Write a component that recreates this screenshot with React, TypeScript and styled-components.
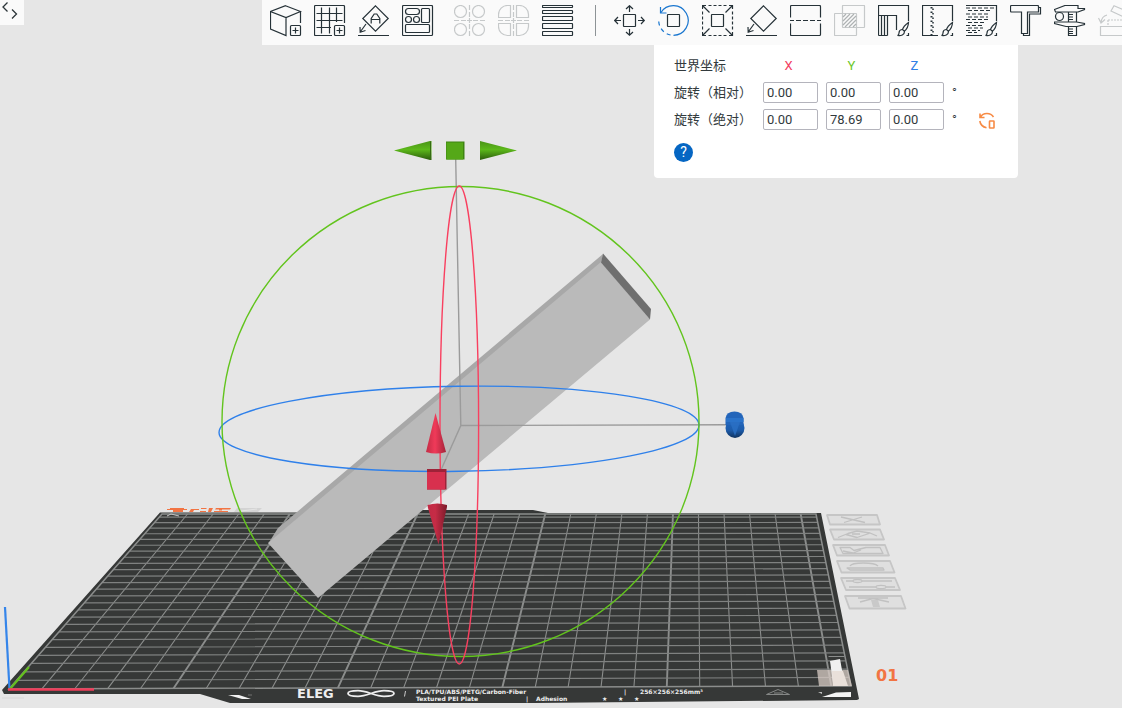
import React from "react";
import styled, { createGlobalStyle } from "styled-components";

const GlobalStyle = createGlobalStyle`
  *, *::before, *::after { box-sizing: border-box; }
  html, body { margin: 0; background: #e6e6e6; }
  body {
    font-family: Roboto, "Noto Sans CJK SC", sans-serif;
    font-size: 13px;
    color: #323a3d;
    overflow: hidden;
  }
`;

const Page = styled.main`
  display: grid;
  grid-template-columns: minmax(0, 1fr);
  min-height: 100vh;
  background: #e6e6e6;
`;

const Scene = styled.svg`
  grid-area: 1 / 1;
  display: block;
  width: 100%;
  height: auto;
`;

const Overlay = styled.div`
  grid-area: 1 / 1;
  z-index: 1;
  display: flex;
  flex-direction: column;
`;

const TopRow = styled.header`
  display: flex;
  align-items: flex-start;
`;

const CodeTab = styled.button`
  flex: none;
  width: 24px;
  height: 25px;
  margin-right: 238px;
  padding: 0;
  border: 0;
  background: #fafafa;
  color: #2c3539;
`;

const Toolbar = styled.nav`
  flex: 1;
  min-width: 0;
  display: flex;
  gap: 12px;
  height: 45px;
  padding: 5px 0 8px 8px;
  background: #fafafa;
  overflow: hidden;
`;

const tones = { normal: "#263238", active: "#1976cf", disabled: "#c6c9ca" };

const Tool = styled.button<{ $tone: keyof typeof tones; $spaced?: boolean }>`
  flex: none;
  width: 32px;
  height: 32px;
  margin-left: ${(p) => (p.$spaced ? "8px" : "0")};
  padding: 0;
  border: 0;
  background: none;
  color: ${(p) => tones[p.$tone]};
`;

const Divider = styled.span`
  flex: none;
  width: 1px;
  height: 31px;
  margin: 0 6px 0 9px;
  background: #8d9396;
`;

const Icon = styled.svg`
  display: block;
  fill: none;
  stroke: currentColor;
`;

const PanelRow = styled.div`
  display: flex;
  justify-content: flex-end;
  padding-right: 104px;
`;

const Panel = styled.section`
  width: 364px;
  padding: 7px 20px 16px;
  background: #fff;
  border-radius: 0 0 4px 4px;
`;

const Row = styled.div`
  display: grid;
  grid-template-columns: 81px repeat(3, 55px) 19px 17px;
  column-gap: 8px;
  align-items: center;
  height: 27px;
`;

const RowLabel = styled.span`
  line-height: 20px;
  white-space: nowrap;
`;

const Axis = styled.span<{ $color: string }>`
  padding-right: 4px;
  text-align: center;
  line-height: 20px;
  color: ${(p) => p.$color};
`;

const Field = styled.input`
  width: 55px;
  height: 21px;
  padding: 0 3px;
  border: 1px solid #b4b4bc;
  border-radius: 2px;
  background: #fff;
  font: 13px/19px Roboto, sans-serif;
  color: #323a3d;
  outline: none;
`;

const Unit = styled.span`
  line-height: 20px;
`;

const ResetButton = styled.button`
  width: 17px;
  height: 20px;
  padding: 2px 0 0;
  border: 0;
  background: none;
  color: #f78b45;
`;

const HelpButton = styled.button`
  display: block;
  width: 19px;
  height: 19px;
  margin-top: 10px;
  padding: 0;
  border: 0;
  border-radius: 50%;
  background: #0566c3;
  color: #fff;
  font: 14px/19px Roboto, sans-serif;
  text-align: center;
`;

/* ---------- toolbar glyphs, each on a 32 x 32 grid ---------- */

const plusBadge = (
  <>
    <rect x="20.5" y="20.5" width="10" height="10" rx="1" />
    <path d="M25.5 22.5v6M22.5 25.5h6" />
  </>
);

const layFace = <path d="M17.5.8 30.2 13.5 17.5 26.2 4.8 13.5ZM0 30.5h31M8 19 2.2 27M2 22l.2 5.2 5.3-1.7" />;

const brush = (
  <path d="M30.5 17.5c-2 1.5-5.5 5-6 7l1.8 1.8c2-1.5 4-5.5 4.2-8.8ZM24 24.5c-2 .2-3 1.6-3 3.5 0 1.5-.8 2.3-1.5 2.5 3.5.5 7-.5 7-4M30.5 28v2.5h-2" />
);

const fuzzRows: [number, number][] = [
  [3, 28], [5.5, 25], [9, 23], [12, 22], [14.5, 22], [17.5, 19], [20.5, 18], [23, 17], [25.5, 14], [27.5, 11],
];

const glyphs: Record<string, React.ReactNode> = {
  add: (
    <>
      <path d="M15.5.7 30.5 6.5 16 12.5.5 6.5ZM.5 6.5V24L16 30.5v-18M30.5 6.5V18" />
      {plusBadge}
    </>
  ),
  plate: (
    <>
      <path d="M30.5 18V1.5a1 1 0 0 0-1-1h-28a1 1 0 0 0-1 1v28a1 1 0 0 0 1 1H18" />
      <path d="M7.5 2.5v26M15.5 2.5v26M22.5 2.5V17M2.5 8.5h26M2.5 15.5h26M2.5 22.5H17" />
      {plusBadge}
    </>
  ),
  orient: (
    <>
      {layFace}
      <path d="M13.2 18.5v-5l3-4.500h2.600l3 4.500v5M13.200 14.500h8.600" />
    </>
  ),
  arrange: (
    <>
      <rect x=".5" y=".5" width="30" height="30" rx="1" />
      <rect x="3.5" y="3.5" width="14" height="6" rx="3" />
      <rect x="19.5" y="3.5" width="8" height="14" rx="1" />
      <circle cx="6.5" cy="14.5" r="3" />
      <circle cx="14.5" cy="14.5" r="3" />
      <rect x="3.5" y="19.5" width="24" height="8" rx="1" />
    </>
  ),
  objects: (
    <>
      <circle cx="6.5" cy="6.5" r="6" />
      <circle cx="24.5" cy="6.5" r="6" />
      <circle cx="6.5" cy="24.5" r="6" />
      <circle cx="24.5" cy="24.5" r="6" />
      <path d="M15.5 0v5m0 2v5m0 1v5m0 1v5m0 2v5M0 15.5h5m2 0h5m1 0h5m1 0h5m2 0h5" />
    </>
  ),
  parts: (
    <>
      <path d="M12.5.5h-3a9 9 0 0 0-9 9v3h12ZM18.5.5h3a9 9 0 0 1 9 9v3h-12ZM12.5 30.5h-3a9 9 0 0 1-9-9v-3h12ZM18.5 30.5h3a9 9 0 0 0 9-9v-3h-12Z" />
      <path d="M15.5 0v5m0 2v5m0 1v5m0 1v5m0 2v5M0 15.5h5m2 0h5m1 0h5m1 0h5m2 0h5" />
    </>
  ),
  layers: (
    <>
      <rect x=".5" y=".5" width="30" height="2" rx=".5" />
      <rect x=".5" y="5.5" width="30" height="3" rx=".5" />
      <rect x=".5" y="11.5" width="30" height="4" rx=".5" />
      <rect x=".5" y="18.5" width="30" height="5" rx=".5" />
      <rect x=".5" y="26.5" width="30" height="4" rx=".5" />
    </>
  ),
  move: (
    <>
      <rect x="9.5" y="9.5" width="12" height="12" rx=".5" />
      <path d="M15.5 7V.7M12 4 15.5.7 19 4M15.5 24v6.3M12 27l3.5 3.3L19 27M7 15.5H.7M4 12 .7 15.5 4 19M24 15.5h6.3M27 12l3.3 3.5L27 19" />
    </>
  ),
  rotate: (
    <>
      <rect x="9.5" y="9.5" width="12" height="12" rx=".5" stroke="#263238" />
      <path d="M2.8 7.7A14.8 14.8 0 1 1 15.5 30.3" />
      <path d="M15.5 30.3A14.8 14.8 0 0 1 .7 15.5" strokeDasharray="4 3.5" strokeDashoffset="-3" />
      <path d="M2.5 2v6h6" />
    </>
  ),
  scale: (
    <>
      <rect x="9.5" y="9.5" width="12" height="12" rx=".5" />
      <path d="M.5 4V.5H4M27 .5h3.5V4M.5 27v3.5H4M30.5 27v3.5H27M.5.5l7 7M30.5.5l-7 7M.5 30.5l7-7M30.5 30.5l-7-7" />
      <path d="M6.5.5h18M6.5 30.5h18M.5 6.5v18M30.5 6.5v18" strokeDasharray="3 2" />
    </>
  ),
  lay: layFace,
  cut: <path d="M.5 12.5v-11a1 1 0 0 1 1-1h28a1 1 0 0 1 1 1v11M.5 18.5v11a1 1 0 0 0 1 1h28a1 1 0 0 0 1-1v-11M0 15.5h4m2 0h5m2 0h5m2 0h5m2 0h4" />,
  boolean: (
    <>
      <rect x=".5" y="8.5" width="22" height="22" rx=".5" />
      <rect x="8.5" y=".5" width="22" height="22" rx=".5" />
      <path d="M9 12l3-3M9 16l7-7M9 20l11-11M11 22 22 11M15 22l7-7M19 22l3-3" stroke="#aeb2b3" />
    </>
  ),
  support: (
    <>
      <path d="M.5 30.5V.5h30V16M.5 10.5h18V25M3.5 10.5v20M6.5 10.5v20M9.5 10.5v20M.5 30.5h9" />
      {brush}
    </>
  ),
  seam: (
    <>
      <path d="M30.5 16V.5H.5v30H16" />
      <path d="M9.5 2v28" strokeDasharray="1.5 3" strokeWidth="2" />
      <path d="M11 3.5v26" strokeDasharray="1.5 3" strokeWidth="1.5" />
      {brush}
    </>
  ),
  fuzzy: (
    <>
      <path d="M0 .5h30.5V16M0 30.5h16" />
      {fuzzRows.map(([y, end], i) => (
        <path key={y} d={`M${i % 2 ? 2 : 0} ${y}H${end}`} strokeDasharray="4 2" />
      ))}
      {brush}
    </>
  ),
  text: (
    <>
      <path d="M.5 1.5a1 1 0 0 1 1-1h26a1 1 0 0 1 1 1V7h-11v21.5h-6V7h-10a1 1 0 0 1-1-1Z" />
      <path d="M28.5 2.5h2V9h-11v21.5h-6v-2" />
    </>
  ),
  measure: (
    <>
      <path d="M.5 4.5 11 .5h13v3h6.5v1L24 7H1.500ZM.5 17h22l8 1.500v1L23 21.500H12L.5 18.500Z" />
      <circle cx="5.500" cy="11.500" r="4" />
      <path d="M14.5 7v10M22.500 7v10M14.500 22v8.500h8V22M15 9.500h4M15 12h4M15 14.500h4M15 24h4M15 26.500h4M15 28.500h4" />
    </>
  ),
  assembly: (
    <>
      <path d="M2.5 21.5h29v9h-29ZM16 .8 33 8l-3 6-17-8Z" />
      <path d="M10 15h22M10 15v6" strokeDasharray="2 1" />
      <path d="M9 10C5 11 3.5 13 3 17.5M.5 13 3 18l4-3.5" />
    </>
  ),
};

type ToolDef = { id: string; label: string; tone?: keyof typeof tones; spaced?: boolean };

const plateTools: ToolDef[] = [
  { id: "add", label: "添加" },
  { id: "plate", label: "添加盘" },
  { id: "orient", label: "自动朝向" },
  { id: "arrange", label: "自动摆放" },
  { id: "objects", label: "拆分到对象", tone: "disabled", spaced: true },
  { id: "parts", label: "拆分到零件", tone: "disabled" },
  { id: "layers", label: "可变层高" },
];

const objectTools: ToolDef[] = [
  { id: "move", label: "移动" },
  { id: "rotate", label: "旋转", tone: "active" },
  { id: "scale", label: "缩放" },
  { id: "lay", label: "选择底面" },
  { id: "cut", label: "切割" },
  { id: "boolean", label: "网格布尔", tone: "disabled" },
  { id: "support", label: "支撑绘制" },
  { id: "seam", label: "Z缝绘制" },
  { id: "fuzzy", label: "绒毛表面" },
  { id: "text", label: "文字" },
  { id: "measure", label: "测量" },
  { id: "assembly", label: "装配", tone: "disabled" },
];

const renderTool = ({ id, label, tone = "normal", spaced }: ToolDef) => (
  <Tool key={id} type="button" aria-label={label} $tone={tone} $spaced={spaced}>
    <Icon width="32" height="32" viewBox="0 0 32 32" strokeWidth="1.2">
      {glyphs[id]}
    </Icon>
  </Tool>
);

/* ---------- build plate, in perspective ---------- */

type Pt = [number, number];
const FL: Pt = [9, 689];
const FR: Pt = [851, 686];
const BL: Pt = [162, 514];
const BR: Pt = [816, 514];
const DEPTH = 1.287;
const SIZE = 256;

function project(mx: number, my: number): string {
  const u = mx / SIZE;
  const v = my / SIZE;
  const w = 1 - v + v * DEPTH;
  const mix = (i: 0 | 1) => {
    const front = FL[i] + (FR[i] - FL[i]) * u;
    const back = BL[i] + (BR[i] - BL[i]) * u;
    return ((1 - v) * front + v * DEPTH * back) / w;
  };
  return `${mix(0).toFixed(2)} ${mix(1).toFixed(2)}`;
}

const steps = Array.from({ length: 25 }, (_, i) => (i + 1) * 10);
const fine = steps.filter((s) => s % 50 !== 0);
const bold = steps.filter((s) => s % 50 === 0);
const column = (s: number) => `M${project(s, 0)}L${project(s, SIZE)}`;
const row = (s: number) => `M${project(0, s)}L${project(SIZE, s)}`;

const PlateGrid = () => (
  <g fill="none" stroke="#8b8d8c">
    <path d={fine.map(column).join("")} strokeWidth="1.1" />
    <path d={bold.map(column).join("")} strokeWidth="1.9" />
    <path d={steps.map(row).join("")} strokeWidth="1.2" stroke="#7f8180" />
    <path d={`M${project(0, 0)}L${project(SIZE, 0)}L${project(SIZE, SIZE)}L${project(0, SIZE)}Z`} strokeWidth="1.5" />
  </g>
);

const plateButtons: { box: string; mark: string }[] = [
  { box: "M827 515h50l3 9.5h-50Z", mark: "M841 517l24 5.5M862 517l-18 5.5" },
  { box: "M830 529.5h50l4 10h-50Z", mark: "M838 537.5l10-4 9-2.5 13 2 7 3M846 534.5l11 3 12-4M852 534h8" },
  { box: "M833 545h52l4 10.5h-52Z", mark: "M840 547.5h10l4 3 12-3h14l3 6h-40ZM843 551l10 2 8-3" },
  { box: "M837 561h53l4.5 11.5h-53Z", mark: "M850 566c2-4 24-4 28 0M847 568h36l1 2h-34Z" },
  { box: "M841 578h54l5 12h-54Z", mark: "M846 581h7m9 0h30M849 587h27m10 0h9M853 581a4.500 1.500 0 1 0 9 0a4.500 1.500 0 1 0-9 0M876 587a5 1.600 0 1 0 10 0a5 1.600 0 1 0-10 0" },
  { box: "M845 596h56l4.5 12.5h-56Z", mark: "M858 598h30M860 602l13-3.5 16 3.500" },
];

const PlateButtons = () => (
  <g strokeLinejoin="round">
    {plateButtons.map(({ box, mark }) => (
      <g key={box}>
        <path d={box} fill="#dfdfdf" stroke="#c6c6c6" strokeWidth="1.8" />
        <path d={mark} fill="none" stroke="#c1c1c1" strokeWidth="1.3" />
      </g>
    ))}
    <path d="M871 600h7l2 7h-7Z" fill="#c9c9c9" />
  </g>
);

const PlateText = styled.text<{ $size: number; $color?: string }>`
  font-family: "DejaVu Sans", sans-serif;
  font-weight: bold;
  font-size: ${(p) => p.$size}px;
  fill: ${(p) => p.$color ?? "#eeeeee"};
`;

const plateNotes: { y: number; words: [number, string][] }[] = [
  { y: 694, words: [[416, "PLA/TPU/ABS/PETG/Carbon-Fiber"], [624, "|"], [640, "256×256×256mm³"]] },
  { y: 701, words: [[416, "Textured PEI Plate"], [526, "|"], [536, "Adhesion"], [602, "★"], [618, "★"], [634, "★"]] },
];

const Viewport = () => (
  <Scene viewBox="0 0 1122 708" preserveAspectRatio="xMinYMin meet" role="img" aria-label="3D">
    <defs>
      <linearGradient id="greenCone" x1="0" y1="0" x2="0" y2="1">
        <stop offset="0" stopColor="#4a9417" />
        <stop offset=".45" stopColor="#5cb81a" />
        <stop offset="1" stopColor="#2c5c0c" />
      </linearGradient>
      <linearGradient id="redCone">
        <stop offset="0" stopColor="#c22c45" />
        <stop offset=".45" stopColor="#f03a59" />
        <stop offset="1" stopColor="#a5243a" />
      </linearGradient>
      <linearGradient id="redConeDark">
        <stop offset="0" stopColor="#c12b45" />
        <stop offset=".4" stopColor="#c62c46" />
        <stop offset="1" stopColor="#7c1b2b" />
      </linearGradient>
      <linearGradient id="blueCone" x1="0" y1="0" x2="0" y2="1">
        <stop offset="0" stopColor="#2168c0" />
        <stop offset=".6" stopColor="#1d5cab" />
        <stop offset="1" stopColor="#10335f" />
      </linearGradient>
    </defs>

    <path d="M160 512.5H400l10-2.5h123l15 3h273l38 186-2 1-322 3H230l-30-9H4l-2-4Z" fill="#363837" />
    <PlateGrid />
    <path d="M167 516l4-2 8 2" fill="none" stroke="#c4c4c4" />
    <path d="M2 698h22" stroke="#d8d8d8" />

    <g fill="#f27443">
      <path d="M170 508h14v1h3v1h-4v2h-10v-2h-6v-1h3Z" />
      <path d="M191 509h8v1h-5l-1 2h-4ZM201 508h6l-1 1h-5ZM200 511h6v1h-6ZM209 508h4l-2 4h-3ZM216 508h15l-1 1.500h-15ZM214 511h14v1h-14ZM219 509.500h3v1h-3Z" />
    </g>
    <path d="M237 508h25l-4 4h-24Z" fill="#d3d3d3" />
    <path d="M241 511l16-2" stroke="#e4e4e4" />

    <PlateButtons />

    <path d="M228 695h11l12 4h-9Z" fill="#f2f2f2" />
    <path d="M248 695h4" stroke="#707070" />
    <PlateText $size={13} x="297" y="698">ELEG</PlateText>
    <path
      d="M371 693.5c6-2 9-2.800 13-2.800 6 0 10 1 10 2.800s-4 2.800-10 2.800c-4 0-7-.8-13-2.800s-9-2.800-13-2.800c-6 0-10 1-10 2.800s4 2.800 10 2.800c4 0 7-.8 13-2.800Z"
      fill="none"
      stroke="#eeeeee"
      strokeWidth="1.8"
    />
    <path d="M405.5 691l-1 5.5" stroke="#cccccc" />
    {plateNotes.map(({ y, words }) =>
      words.map(([x, word]) => (
        <PlateText key={`${x}-${y}`} $size={6} x={x} y={y}>
          {word}
        </PlateText>
      )),
    )}
    <path d="M778 689.5l11.5 5h-23ZM774 693h9" fill="none" stroke="#858786" />
    <path d="M817 670h31l4 16h-33Z" fill="#d8ccc6" opacity=".75" />
    <path d="M830 661l10-2 4 22-11 2Z" fill="#f0f0f0" />
    <path d="M832 671h11l5 15h-15Z" fill="#e9e0da" />
    <path d="M828.5 656.500h16" stroke="#8b8d8c" />
    <path d="M836 692.5l15-.5v5h-29Z" fill="#f4f4f4" />
    <path d="M818 692h4v2Z" fill="#c0c0c0" />
    <PlateText $size={16} $color="#f27443" x="876" y="681">01</PlateText>

    <g fill="none">
      <path d="M9.5 689 5 607" stroke="#3585ea" strokeWidth="2.2" />
      <path d="M9.5 689.5 29 667" stroke="#65c01f" strokeWidth="2.2" />
      <path d="M8 689.5h86" stroke="#f23c5a" strokeWidth="2.5" />
    </g>

    <path d="M603 254 601 263 268 544 278 528Z" fill="#a8a8a8" />
    <path d="M601 262 650 319.5 318 598 268 543Z" fill="#bababa" />
    <path d="M603 253.5 651 309 650 319.500 601 262.500Z" fill="#6f6f6f" />

    <g fill="none" stroke="#9b9b9b" strokeWidth="1.4">
      <path d="M455.7 159 460.8 425.5 441 470" />
      <path d="M460.5 425.5 727 424.8" />
    </g>
    <g fill="none" strokeWidth="1.4">
      <ellipse cx="459" cy="428.8" rx="240" ry="42.5" transform="rotate(-.9 459 429)" stroke="#2f80ea" />
      <ellipse cx="460.5" cy="421.5" rx="238.5" ry="235" stroke="#62c41d" />
      <ellipse cx="459.3" cy="425" rx="19.3" ry="239" stroke="#f93f5f" />
    </g>

    <path d="M394 150.5 430 141h1.5v19H430Z" fill="url(#greenCone)" />
    <path d="M430.5 141.5v18" stroke="#356b12" />
    <path d="M517 150.5 480 141v19Z" fill="url(#greenCone)" />
    <rect x="446" y="141.5" width="18.5" height="18" fill="#3f8412" />
    <rect x="446.5" y="142.5" width="16.5" height="17" fill="#55a818" />

    <path d="M435.5 413 446 452q-10 3-20 0Z" fill="url(#redCone)" />
    <path d="M427 469h19.500v20.500H427Z" fill="#9e2238" />
    <path d="M427 472h18v17.500h-18Z" fill="#d8304e" />
    <path d="M427.500 505q10-3 19.500 0v2l-8.500 37.500L428 508Z" fill="url(#redConeDark)" />

    <ellipse cx="735" cy="428" rx="9.500" ry="10" fill="url(#blueCone)" />
    <path d="M725.500 418q1-6.500 9-6.500t9 6.500v7h-18Z" fill="#2365ba" />
    <path d="M726 418h17.500v4H726Z" fill="#2a73ca" />
    <path d="M730 422h10l-5 14Z" fill="#2a70c6" opacity=".8" />
  </Scene>
);

/* ---------- rotation panel ---------- */

const axes = [
  { name: "X", color: "#f2405f" },
  { name: "Y", color: "#6cc72b" },
  { name: "Z", color: "#2f80e6" },
];

const rotations = [
  { id: "relative", label: "旋转（相对）", values: ["0.00", "0.00", "0.00"], reset: false },
  { id: "absolute", label: "旋转（绝对）", values: ["0.00", "78.69", "0.00"], reset: true },
];

const RotatePanel = () => (
  <Panel>
    <Row>
      <RowLabel>世界坐标</RowLabel>
      {axes.map((a) => (
        <Axis key={a.name} id={`axis-${a.name}`} $color={a.color}>
          {a.name}
        </Axis>
      ))}
    </Row>
    {rotations.map((r) => (
      <Row key={r.id}>
        <RowLabel id={r.id}>{r.label}</RowLabel>
        {r.values.map((value, i) => (
          <Field key={axes[i].name} defaultValue={value} aria-labelledby={`${r.id} axis-${axes[i].name}`} />
        ))}
        <Unit>°</Unit>
        {r.reset && (
          <ResetButton type="button" aria-label="重置旋转">
            <Icon width="17" height="18" viewBox="0 0 17 18" strokeWidth="1.6">
              <path d="M1 1.5v4h4.500M1.500 5C4 .5 11.500.2 14.500 5M.8 9c.5 3 3 6 6.700 6.800" />
              <rect x="10.5" y="9" width="4.5" height="7" rx=".5" />
            </Icon>
          </ResetButton>
        )}
      </Row>
    ))}
    <HelpButton type="button" aria-label="帮助">?</HelpButton>
  </Panel>
);

export default function App() {
  return (
    <>
      <GlobalStyle />
      <Page>
        <Viewport />
        <Overlay>
          <TopRow>
            <CodeTab type="button" aria-label="展开">
              <Icon width="24" height="25" viewBox="0 0 24 25" strokeWidth="1.3">
                <path d="M7.5 2.5 3 7l4.500 4.500M12 9.500l4.500 4.500-4.500 4.500" />
              </Icon>
            </CodeTab>
            <Toolbar aria-label="工具栏">
              {plateTools.map(renderTool)}
              <Divider />
              {objectTools.map(renderTool)}
            </Toolbar>
          </TopRow>
          <PanelRow>
            <RotatePanel />
          </PanelRow>
        </Overlay>
      </Page>
    </>
  );
}
